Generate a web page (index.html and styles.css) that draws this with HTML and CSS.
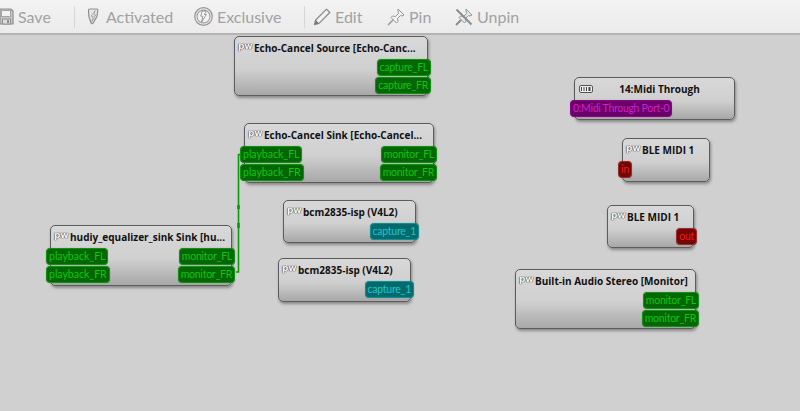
FILE: index.html
```html
<!DOCTYPE html>
<html lang="en">
<head>
    <meta charset="UTF-8">
    <meta name="viewport" content="width=device-width, initial-scale=1.0">
    <title>Patchbay</title>
    <link rel="stylesheet" href="styles.css">
</head>
<body>
    <header class="toolbar">
        <div class="tool tool-save">
            <svg class="icon icon-save" viewBox="0 0 15 17"><path d="M1 1h11l2 2v13H1z" fill="#c8c8c8" stroke="#8e8e8e" stroke-width="1.200"/><rect x="2.500" y="2.500" width="9" height="6" fill="#f2f2f2" stroke="#a4a4a4"/><rect x="3.500" y="11" width="8" height="5" fill="#dcdcdc" stroke="#8e8e8e"/><rect x="8" y="12" width="2" height="3" fill="#8e8e8e"/></svg>
            <span>Save</span>
        </div>
        <div class="sep sep-one"></div>
        <div class="tool tool-activated">
            <svg class="icon icon-bolt" viewBox="0 0 12 17"><path d="M3 1h6.500c1 0 1.500.6 1.300 1.500L10 8c-.2 1-.5 1.500-1 2.200L6 15.200c-.6.9-1.700.6-2-.4L2 9 1.500 2.500C1.400 1.500 2 1 3 1z" fill="#e8e8e8" stroke="#8c8c8c" stroke-width="1.200"/><path d="M8.200 2.500L4 8.200h2.300L4.800 13.500 8.800 7H6.600z" fill="#fcfcfc" stroke="#8c8c8c" stroke-width=".7"/></svg>
            <span>Activated</span>
        </div>
        <div class="tool tool-exclusive">
            <svg class="icon icon-ring" viewBox="0 0 19 19"><circle cx="9.500" cy="9.500" r="8.800" fill="#e6e6e6" stroke="#969696" stroke-width="1.200"/><circle cx="9.500" cy="9.500" r="6.400" fill="#f4f4f4" stroke="#a0a0a0" stroke-width="1.100"/><path d="M8.200 4h4l-1.800 3.500h2L7.600 15l1.200-5.800H6.800z" fill="#fcfcfc" stroke="#8c8c8c" stroke-width=".9"/></svg>
            <span>Exclusive</span>
        </div>
        <div class="sep sep-two"></div>
        <div class="tool tool-edit">
            <svg class="icon" viewBox="0 0 18 18"><path d="M13.500 1.200l3.300 3.300L6 15.300l-4.600 1.300 1.300-4.600z" fill="#f2f2f2" stroke="#8a8a8a" stroke-width="1.200" stroke-linejoin="round"/><path d="M1.600 16.400l1.100-4.400 3.300 3.300z" fill="#777"/></svg>
            <span>Edit</span>
        </div>
        <div class="tool tool-pin">
            <svg class="icon" viewBox="0 0 18 18"><path d="M11 1l6 6-2 1-1.500-.5-3 3 .5 3-1.500 1.500L4 9.500 5.500 8l3 .5 3-3L11 3z" fill="#f2f2f2" stroke="#949494" stroke-linejoin="round"/><path d="M6 12l-5 5" stroke="#949494" stroke-width="1.400"/></svg>
            <span>Pin</span>
        </div>
        <div class="tool tool-unpin">
            <svg class="icon" viewBox="0 0 18 18"><path d="M11 1l6 6-2 1-1.500-.5-3 3 .5 3-1.500 1.500L4 9.500 5.500 8l3 .5 3-3L11 3z" fill="#e8e8e8" stroke="#949494" stroke-linejoin="round"/><path d="M1.500 1.500l15 15M6 12l-5 5" stroke="#8c8c8c" stroke-width="2"/></svg>
            <span>Unpin</span>
        </div>
    </header>

    <main class="canvas">
        <!-- connection from hudiy monitor to echo cancel playback -->
        <svg class="wires" viewBox="0 0 800 376">
            <path d="M241 119.500 H238.500 V237 H236" fill="none" stroke="#0a9a0a" stroke-width="1.600"/>
            <path d="M238.500 170 v4 M238.500 188 v5" stroke="#0a9a0a" stroke-width="2.600"/>
        </svg>

        <div class="node node-echo-source">
            <div class="node-title"><span class="pw">pw</span><b>Echo-Cancel Source [Echo-Canc...</b></div>
            <div class="port-list">
                <div class="row"><span class="port audio out">capture_FL</span></div>
                <div class="row"><span class="port audio out">capture_FR</span></div>
            </div>
        </div>

        <div class="node node-echo-sink">
            <div class="node-title"><span class="pw">pw</span><b>Echo-Cancel Sink [Echo-Cancel...</b></div>
            <div class="port-list">
                <div class="row"><span class="port audio in">playback_FL</span><span class="port audio out">monitor_FL</span></div>
                <div class="row"><span class="port audio in">playback_FR</span><span class="port audio out">monitor_FR</span></div>
            </div>
        </div>

        <div class="node node-hudiy">
            <div class="node-title"><span class="pw">pw</span><b>hudiy_equalizer_sink Sink [hu...</b></div>
            <div class="port-list">
                <div class="row"><span class="port audio in">playback_FL</span><span class="port audio out">monitor_FL</span></div>
                <div class="row"><span class="port audio in">playback_FR</span><span class="port audio out">monitor_FR</span></div>
            </div>
        </div>

        <div class="node node-bcm-one">
            <div class="node-title"><span class="pw">pw</span><b>bcm2835-isp (V4L2)</b></div>
            <div class="port-list">
                <div class="row"><span class="port video out">capture_1</span></div>
            </div>
        </div>

        <div class="node node-bcm-two">
            <div class="node-title"><span class="pw">pw</span><b>bcm2835-isp (V4L2)</b></div>
            <div class="port-list">
                <div class="row"><span class="port video out">capture_1</span></div>
            </div>
        </div>

        <div class="node node-midi-through">
            <div class="node-title title-center">
                <svg class="alsa" viewBox="0 0 14 8"><rect x=".5" y=".5" width="13" height="7" rx="1.500" fill="#f0f0f0" stroke="#555"/><path d="M2 2v4h1V2zM4.500 2v4h1V2zM7 2v4h1V2zM9.500 2v4h2V2z" fill="#444"/></svg>
                <b>14:Midi Through</b>
            </div>
            <div class="port-list">
                <div class="row"><span class="port alsa-port in">0:Midi Through Port-0</span></div>
            </div>
        </div>

        <div class="node node-ble-in">
            <div class="node-title"><span class="pw">pw</span><b>BLE MIDI 1</b></div>
            <div class="port-list">
                <div class="row"><span class="port midi in">in</span></div>
            </div>
        </div>

        <div class="node node-ble-out">
            <div class="node-title"><span class="pw">pw</span><b>BLE MIDI 1</b></div>
            <div class="port-list">
                <div class="row"><span class="port midi out">out</span></div>
            </div>
        </div>

        <div class="node node-builtin">
            <div class="node-title"><span class="pw">pw</span><b>Built-in Audio Stereo [Monitor]</b></div>
            <div class="port-list">
                <div class="row"><span class="port audio out">monitor_FL</span></div>
                <div class="row"><span class="port audio out">monitor_FR</span></div>
            </div>
        </div>
    </main>
</body>
</html>
```

FILE: styles.css
```css
/* General Styles */
html, body {
    margin: 0;
    padding: 0;
    height: 100%;
    overflow: hidden;
}

body {
    font-family: 'Open Sans', 'Noto Sans', sans-serif;
    background-color: #d0d0d0;
    display: flex;
    flex-direction: column;
}

/* Toolbar */
.toolbar {
    height: 33px;
    flex: none;
    display: flex;
    align-items: center;
    background: linear-gradient(#f3f3f3, #ebebeb);
    border-bottom: 2px solid #b4b4b4;
    color: #a2a2a2;
    font-family: 'Lato', sans-serif;
    font-size: 16px;
}

.tool {
    display: flex;
    align-items: center;
    gap: 4px;
    flex: none;
}

.tool span {
    margin-top: -1px;
}

.icon {
    width: 18px;
    height: 18px;
    flex: none;
}

.icon-save {
    width: 15px;
    height: 17px;
}

.icon-bolt {
    width: 12px;
    height: 17px;
}

.icon-ring {
    width: 19px;
    height: 19px;
}

.sep {
    width: 1px;
    height: 22px;
    background-color: #d6d6d6;
    flex: none;
}

.tool-save { margin-left: -1px; width: 75px; }
.tool-activated { margin-left: 12px; width: 90px; gap: 7px; }
.tool-exclusive { margin-left: 17px; width: 100px; }
.sep-two { margin-left: 10px; }
.tool-edit { margin-left: 8px; width: 50px; }
.tool-pin { margin-left: 24px; width: 44px; }
.tool-unpin { margin-left: 24px; }

/* Canvas */
.canvas {
    position: relative;
    flex: 1;
}

.wires {
    position: absolute;
    left: 0;
    top: 0;
    width: 800px;
    height: 376px;
    z-index: 2;
}

/* Nodes */
.node {
    position: absolute;
    box-sizing: border-box;
    border: 1px solid #5c5c5c;
    border-radius: 5px;
    background: linear-gradient(#d8d8d8 0%, #d0d0d0 55%, #a8a8a8 100%);
    box-shadow: 1px 2px 3px rgba(0, 0, 0, 0.35);
}

.node-title {
    display: flex;
    align-items: center;
    height: 17px;
    padding: 2px 0 0 3px;
    font-size: 10px;
    color: #111;
    white-space: nowrap;
}

.node-title b {
    font-weight: 700;
    margin-left: 3px;
}

.title-center b {
    flex: 1;
    text-align: center;
    margin-left: 0;
    margin-right: 8px;
}

.pw {
    width: 13px;
    font-family: 'DejaVu Sans', sans-serif;
    font-size: 9px;
    font-weight: 700;
    letter-spacing: -0.3px;
    line-height: 8px;
    color: #f6f6f6;
    text-shadow: 0 0 1px #222, 0 0 1px #222;
    margin-top: -4px;
}

.alsa {
    width: 14px;
    height: 8px;
    margin-left: 1px;
}

.port-list {
    display: flex;
    flex-direction: column;
    gap: 1px;
    padding-top: 3px;
}

.row {
    display: flex;
    justify-content: space-between;
    margin: 0 -4px 0 -5px;
}

.port {
    height: 17px;
    box-sizing: border-box;
    padding: 0 2px;
    border-radius: 4px;
    font-family: 'Lato', sans-serif;
    font-size: 10.500px;
    line-height: 15px;
    white-space: nowrap;
    box-shadow: 0 0 1px rgba(0, 0, 0, 0.4);
}

.port.out {
    margin-left: auto;
    letter-spacing: -0.25px;
}

.audio {
    background-color: #046604;
    border: 1px solid #0a960a;
    color: #12c412;
}

.video {
    background-color: #056a6c;
    border: 1px solid #0a9296;
    color: #1cc6cc;
}

.alsa-port {
    background-color: #6a006a;
    border: 1px solid #8e008e;
    color: #d020d0;
    letter-spacing: -0.3px;
}

.midi {
    background-color: #750606;
    border: 1px solid #a02a2a;
    color: #e02020;
}

/* Node positions on the canvas */
.node-echo-source { left: 234px; top: 1px; width: 194px; height: 60px; }
.node-echo-sink { left: 244px; top: 88px; width: 190px; height: 60px; }
.node-hudiy { left: 50px; top: 190px; width: 182px; height: 61px; }
.node-bcm-one { left: 283px; top: 165px; width: 133px; height: 43px; }
.node-bcm-two { left: 278px; top: 223px; width: 133px; height: 44px; }
.node-midi-through { left: 574px; top: 42px; width: 161px; height: 43px; }
.node-ble-in { left: 622px; top: 103px; width: 88px; height: 44px; }
.node-ble-out { left: 607px; top: 170px; width: 87px; height: 43px; }
.node-builtin { left: 515px; top: 234px; width: 181px; height: 60px; }
```
